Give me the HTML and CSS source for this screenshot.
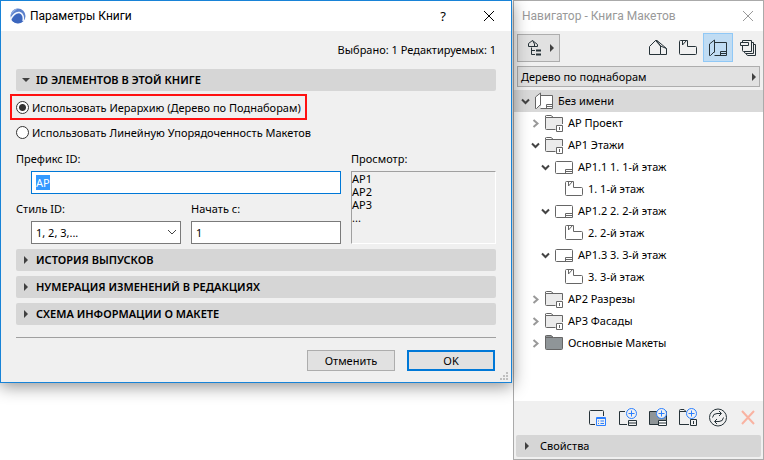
FILE: index.html
```html
<!DOCTYPE html>
<html lang="ru">
<head>
    <meta charset="UTF-8">
    <meta name="viewport" content="width=device-width, initial-scale=1.0">
    <title>Параметры Книги</title>
    <link rel="stylesheet" href="styles.css">
</head>
<body>

    <!-- icons used more than once -->
    <svg class="sprite" aria-hidden="true">
        <symbol id="close" viewBox="0 0 12 12"><path d="M1 1L11 11M11 1L1 11"/></symbol>
        <symbol id="right" viewBox="0 0 6 8"><path class="solid" d="M1 0V8L5 4z"/></symbol>
        <symbol id="down" viewBox="0 0 8 6"><path class="solid" d="M0 1H8L4 5z"/></symbol>
        <symbol id="open" viewBox="0 0 9 9"><path d="M1 2.500L4.500 6L8 2.500"/></symbol>
        <symbol id="closed" viewBox="0 0 9 9"><path d="M2.500 1L6.500 4.500L2.500 8"/></symbol>
        <symbol id="book" viewBox="0 0 18 18">
            <path d="M5.500 3.500H17.500V16.500H5.500M5.500 13.500V1L0.500 5V16.500H1.500L5.500 12.500M11.500 16.500V12.500H17.500M11.500 14.500H17.500"/>
        </symbol>
        <symbol id="plan" viewBox="0 0 18 18">
            <path d="M0.500 2.500Q0.500 1.500 1.500 1.500H8.500V7.500H16.500Q17.500 7.500 17.500 8.500V14.500Q17.500 15.500 16.500 15.500H1.500Q0.500 15.500 0.500 14.500z"/>
            <path d="M3.500 1.500V6L7.500 1.500"/>
        </symbol>
        <symbol id="folder" viewBox="0 0 18 18">
            <path class="fill" d="M0.500 15.500V3.500H17.500V15.500z"/>
            <path d="M10.500 15.500H1.500Q0.500 15.500 0.500 14.500V3.500H17.500V10"/>
            <path d="M0.500 3.500V2Q0.500 1.500 1.500 1.500H6L8.500 3.500"/>
            <path class="page" d="M11.500 11.500H17.500V17.500H11.500z"/>
            <path d="M14.500 13V16"/>
        </symbol>
        <symbol id="folder-full" viewBox="0 0 18 18">
            <path class="full" d="M0.500 14.500V2Q0.500 1.500 1.500 1.500H6L8.500 3.500H17.500V14.500Q17.500 15.500 16.500 15.500H1.500Q0.500 15.500 0.500 14.500z"/>
            <path d="M0.500 3.500H8.500"/>
        </symbol>
        <symbol id="layout" viewBox="0 0 18 18">
            <path d="M1.500 3.500H16.500Q17.500 3.500 17.500 4.500V15.500H1.500Q0.500 15.500 0.500 14.500V4.500Q0.500 3.500 1.500 3.500zM10.500 15.500V11.500H17.500M10.500 13.500H17.500"/>
        </symbol>
    </svg>

    <main class="desktop">

        <form class="dialog">
            <header class="titlebar">
                <svg class="logo" viewBox="0 0 16 16">
                    <circle cx="8" cy="8" r="7.500" fill="#5b80cc"/>
                    <path d="M0.500 8C1 4 4 0.500 8 0.500C6 2 3 4 0.500 8z" fill="#8eabe2"/>
                    <path d="M1.500 12C4 7 7 5 9.500 5.500C12 6.500 13 10 12 14C8 16.500 3.500 15 1.500 12z" fill="#3c66bd"/>
                    <path d="M0.500 11.500C3 6.500 6.500 4 9.500 4.500C13 5.500 14 9.500 13 13" fill="none" stroke="#f4f8ff" stroke-width="1.500"/>
                </svg>
                <h1>Параметры Книги</h1>
                <button class="plain help" type="button" aria-label="Справка">?</button>
                <button class="plain close" type="button" aria-label="Закрыть"><svg class="x"><use href="#close"/></svg></button>
            </header>

            <div class="content">
                <p class="status">Выбрано: 1 Редактируемых: 1</p>

                <button class="section" type="button"><svg class="mark"><use href="#down"/></svg>ID ЭЛЕМЕНТОВ В ЭТОЙ КНИГЕ</button>

                <div class="choices">
                    <label class="choice marked"><input type="radio" name="order" checked>Использовать Иерархию (Дерево по Поднаборам)</label>
                    <label class="choice"><input type="radio" name="order">Использовать Линейную Упорядоченность Макетов</label>
                </div>

                <div class="settings">
                    <div class="fields">
                        <div class="field wide">
                            <label for="prefix">Префикс ID:</label>
                            <input class="indent" id="prefix" type="text" value="АР">
                        </div>
                        <div class="field">
                            <label for="style">Стиль ID:</label>
                            <div class="select indent">
                                <select id="style"><option>1, 2, 3,...</option></select>
                                <svg viewBox="0 0 10 6"><path d="M1 1L5 5L9 1"/></svg>
                            </div>
                        </div>
                        <div class="field">
                            <label for="start">Начать с:</label>
                            <input id="start" type="text" value="1">
                        </div>
                    </div>
                    <div class="field">
                        <label for="preview">Просмотр:</label>
                        <output id="preview" class="preview">АР1<br>АР2<br>АР3<br>...</output>
                    </div>
                </div>

                <div class="sections">
                    <button class="section" type="button"><svg class="mark"><use href="#right"/></svg>ИСТОРИЯ ВЫПУСКОВ</button>
                    <button class="section" type="button"><svg class="mark"><use href="#right"/></svg>НУМЕРАЦИЯ ИЗМЕНЕНИЙ В РЕДАКЦИЯХ</button>
                    <button class="section" type="button"><svg class="mark"><use href="#right"/></svg>СХЕМА ИНФОРМАЦИИ О МАКЕТЕ</button>
                </div>

                <footer class="actions">
                    <button class="btn" type="button">Отменить</button>
                    <button class="btn main" type="button">OK</button>
                </footer>
            </div>
            <svg class="grip" viewBox="0 0 8 8"><path d="M6 0h2v2H6zM3 3h2v2H3zM6 3h2v2H6zM0 6h2v2H0zM3 6h2v2H3zM6 6h2v2H6z"/></svg>
        </form>

        <aside class="navigator">
            <header class="titlebar">
                <h2>Навигатор - Книга Макетов</h2>
                <button class="plain close" type="button" aria-label="Закрыть"><svg class="x"><use href="#close"/></svg></button>
            </header>

            <div class="toolbar">
                <button class="chooser" type="button" aria-label="Выбор проекта">
                    <svg class="icon" viewBox="0 0 18 18">
                        <path d="M2.500 7.500V4.500L6.500 1.500L11.500 5.500V7.500H2.500M6.500 1.500L8.500 5V7.500M5.500 8.500V15.500H9M5.500 11.500H9"/>
                        <path class="thick" d="M10 11.500H15M10 15.500H15"/>
                    </svg>
                    <svg class="mark"><use href="#right"/></svg>
                </button>
                <div class="tabs">
                    <button class="tab" type="button" aria-label="Карта проекта">
                        <svg class="icon" viewBox="0 0 18 18"><path d="M0.500 15.500V7.500L6.500 1.500L11.500 7V15.500H0.500M6.500 1.500H8L17.500 9.500V15.500H11.500M8 2L11.500 7L17.500 9.500"/></svg>
                    </button>
                    <button class="tab" type="button" aria-label="Карта видов"><svg class="icon"><use href="#plan"/></svg></button>
                    <button class="tab active" type="button" aria-label="Книга макетов"><svg class="icon"><use href="#book"/></svg></button>
                    <button class="tab" type="button" aria-label="Наборы издателя">
                        <svg class="icon" viewBox="0 0 18 18"><path d="M3.500 3.500V1.500H12.500V12.500H4.500Q3.500 12.500 3.500 11.500V6.500M1.500 3.500H9.500V6.500H1.500zM12.500 3.500H14.500V14.500H6.500Q5.500 14.500 5.500 12.500M14.500 5.500H16.500V16.500H8.500Q7.500 16.500 7.500 14.500"/></svg>
                    </button>
                </div>
            </div>

            <div class="picker">
                <button class="view" type="button">Дерево по поднаборам<svg class="mark"><use href="#right"/></svg></button>
            </div>

            <ul class="tree">
                <li class="row current"><svg class="twist open"><use href="#open"/></svg><svg class="icon"><use href="#book"/></svg>Без имени</li>
                <li class="row level1"><svg class="twist"><use href="#closed"/></svg><svg class="icon"><use href="#folder"/></svg>АР Проект</li>
                <li class="row level1"><svg class="twist open"><use href="#open"/></svg><svg class="icon"><use href="#folder"/></svg>АР1 Этажи</li>
                <li class="row level2"><svg class="twist open"><use href="#open"/></svg><svg class="icon"><use href="#layout"/></svg>АР1.1 1. 1-й этаж</li>
                <li class="row level3"><svg class="icon"><use href="#plan"/></svg>1. 1-й этаж</li>
                <li class="row level2"><svg class="twist open"><use href="#open"/></svg><svg class="icon"><use href="#layout"/></svg>АР1.2 2. 2-й этаж</li>
                <li class="row level3"><svg class="icon"><use href="#plan"/></svg>2. 2-й этаж</li>
                <li class="row level2"><svg class="twist open"><use href="#open"/></svg><svg class="icon"><use href="#layout"/></svg>АР1.3 3. 3-й этаж</li>
                <li class="row level3"><svg class="icon"><use href="#plan"/></svg>3. 3-й этаж</li>
                <li class="row level1"><svg class="twist"><use href="#closed"/></svg><svg class="icon"><use href="#folder"/></svg>АР2 Разрезы</li>
                <li class="row level1"><svg class="twist"><use href="#closed"/></svg><svg class="icon"><use href="#folder"/></svg>АР3 Фасады</li>
                <li class="row level1"><svg class="twist"><use href="#closed"/></svg><svg class="icon"><use href="#folder-full"/></svg>Основные Макеты</li>
            </ul>

            <div class="tools">
                <button class="plain" type="button" aria-label="Параметры">
                    <svg class="tool" viewBox="0 0 20 20">
                        <path d="M7 16.500H2.500Q1.500 16.500 1.500 15.500V3.500Q1.500 2.500 2.500 2.500H14.500Q15.500 2.500 15.500 3.500V8"/>
                        <path class="blue" d="M8.500 9.500H17.500V17.500H8.500zM8.500 10.500H17.500M10 13H11M12.500 13H16M10 15.500H11M12.500 15.500H16"/>
                    </svg>
                </button>
                <button class="plain" type="button" aria-label="Новый макет">
                    <svg class="tool" viewBox="0 0 20 20">
                        <path d="M7 3.500H1.500V16.500H9M10.500 17.500V12.500H18.500V17.500zM10.500 15H18.500"/>
                        <circle class="blue" cx="13.500" cy="5.500" r="5"/><path class="blue" d="M13.500 2.500V8.500M10.500 5.500H16.500"/>
                    </svg>
                </button>
                <button class="plain" type="button" aria-label="Новый основной макет">
                    <svg class="tool" viewBox="0 0 20 20">
                        <path class="full" d="M1.500 3.500H18.500V16.500H1.500z"/>
                        <path class="page" d="M10.500 12.500H18.500V17.500H10.500z"/><path d="M10.500 15H18.500"/>
                        <circle class="blue ring" cx="13.500" cy="5.500" r="5"/><path class="blue" d="M13.500 2.500V8.500M10.500 5.500H16.500"/>
                    </svg>
                </button>
                <button class="plain" type="button" aria-label="Новый поднабор">
                    <svg class="tool" viewBox="0 0 20 20">
                        <path d="M11 16.500H1.500V2.500Q1.500 1.500 2.500 1.500H6L8 3.500H1.500M12.500 11.500H18.500V17.500H12.500zM15.500 13V16"/>
                        <circle class="blue" cx="13.500" cy="5.500" r="5"/><path class="blue" d="M13.500 2.500V8.500M10.500 5.500H16.500"/>
                    </svg>
                </button>
                <button class="plain" type="button" aria-label="Обновить">
                    <svg class="tool" viewBox="0 0 20 20">
                        <circle cx="10" cy="9.500" r="8.500"/>
                        <path d="M4.500 9.500Q5 5.500 9 5.500H13M11 3L13.500 5.500L11 8M15.500 9.500Q15 13.500 11 13.500H7M9 11L6.500 13.500L9 16"/>
                    </svg>
                </button>
                <button class="plain" type="button" aria-label="Удалить"><svg class="tool remove" viewBox="0 0 20 20"><path d="M4 3L16 16M16 3L4 16"/></svg></button>
            </div>

            <button class="properties" type="button"><svg class="mark"><use href="#right"/></svg>Свойства</button>
        </aside>
    </main>

    <script src="script.js"></script>
</body>
</html>
```
FILE: styles.css
```css
*{
    box-sizing: border-box;
    margin: 0;
    padding: 0;
}
body{
    font-family: "Noto Sans", "Open Sans", sans-serif;
    font-size: 11px;
    line-height: 13px;
    color: #000;
    background: #fff;
}
button, input, select{
    font: inherit;
    color: inherit;
}
svg{
    display: block;
    flex: none;
    fill: none;
    stroke: #263238;
}
.sprite{
    display: none;
}
.solid{
    fill: #404040;
    stroke: none;
}
.thick{
    stroke-width: 2;
}
.desktop{
    display: flex;
    align-items: flex-start;
    gap: 1px;
    min-height: 100vh;
    overflow: hidden;
}
.plain{
    display: flex;
    align-items: center;
    justify-content: center;
    border: none;
    background: none;
}
.mark{
    width: 8px;
    height: 8px;
}
.icon{
    width: 18px;
    height: 18px;
}

/* dialog */
.dialog{
    position: relative;
    flex: 1;
    border: 1px solid #1883d7;
    background: #f0f0f0;
    box-shadow: 0 3px 16px rgba(0, 0, 0, 0.45);
}
.titlebar{
    display: flex;
    align-items: center;
    height: 30px;
    background: #fff;
}
.titlebar h1, .titlebar h2{
    flex: 1;
    font-family: Roboto, "Noto Sans", sans-serif;
    font-size: 12px;
    font-weight: normal;
}
.dialog .titlebar{
    padding: 0 16px 0 9px;
}
.logo{
    width: 16px;
    height: 16px;
    margin-right: 4px;
    stroke: none;
}
.help{
    width: 14px;
    margin-right: 33px;
    font-size: 13px;
}
.x{
    width: 12px;
    height: 12px;
    stroke: #000;
}
.content{
    padding: 12px 15px 11px;
}
.status{
    margin-bottom: 13px;
    text-align: right;
}
.section{
    display: flex;
    align-items: center;
    gap: 6px;
    width: 100%;
    height: 22px;
    padding: 0 6px 2px;
    border: none;
    border-radius: 2px;
    background: #d6d6d6;
    font-weight: 600;
}
.choices{
    display: flex;
    flex-direction: column;
    align-items: flex-start;
    margin: 3px 0 8px;
}
.choice{
    display: flex;
    align-items: center;
    gap: 3px;
    height: 24px;
}
.marked{
    height: 26px;
    margin: 0 -6px;
    padding: 0 4px;
    border: 2px solid #f11;
}
.choice input{
    appearance: none;
    width: 13px;
    height: 13px;
    border: 1px solid #333;
    border-radius: 50%;
    background: #fff;
}
.choice input:checked{
    background: radial-gradient(circle, #333 3px, #fff 4px);
}
.settings{
    display: grid;
    grid-template-columns: 325fr 145fr;
    gap: 10px;
}
.fields{
    display: grid;
    grid-template-columns: 165fr 150fr;
    gap: 8px 10px;
}
.wide{
    grid-column: span 2;
}
.field{
    display: flex;
    flex-direction: column;
    gap: 6px;
    min-width: 0;
}
.field input, .field select{
    min-width: 0;
    height: 23px;
    padding: 0 4px;
    border: 1px solid #7a7a7a;
    border-radius: 0;
    outline: none;
    background: #fff;
}
.field input:focus{
    border-color: #0078d7;
}
.field input::selection{
    color: #fff;
    background: #3399ff;
}
.indent{
    margin-left: 15px;
}
.select{
    position: relative;
}
.select select{
    appearance: none;
    width: 100%;
}
.select svg{
    position: absolute;
    top: 8px;
    right: 4px;
    width: 10px;
    height: 6px;
    stroke: #444;
    pointer-events: none;
}
.preview{
    flex: 1;
    border: 1px solid #a0a0a0;
    border-right-color: #fff;
    border-bottom-color: #fff;
}
.sections{
    display: flex;
    flex-direction: column;
    gap: 5px;
    margin: 5px 0 12px;
}
.actions{
    display: flex;
    justify-content: flex-end;
    gap: 12px;
    padding: 12px 1px 0 0;
    border-top: 1px solid #a0a0a0;
}
.btn{
    width: 88px;
    height: 21px;
    border: 1px solid #adadad;
    background: #e1e1e1;
}
.btn.main{
    border: 2px solid #0078d7;
}
.grip{
    position: absolute;
    right: 3px;
    bottom: 2px;
    width: 8px;
    height: 8px;
    fill: #bfbfbf;
    stroke: none;
}

/* navigator */
.navigator{
    display: flex;
    flex-direction: column;
    width: 251px;
    height: 100vh;
    border: 1px solid #aaa;
    background: #f0f0f0;
}
.navigator .titlebar{
    padding: 0 9px 0 8px;
    color: #999;
}
.navigator .x{
    stroke: #999;
}
.toolbar{
    display: flex;
    align-items: center;
    justify-content: space-between;
    padding: 2px 0 3px 3px;
}
.chooser{
    display: flex;
    align-items: center;
    gap: 4px;
    height: 28px;
    padding: 0 3px 0 8px;
    border: 1px solid #adadad;
    background: #e1e1e1;
}
.tabs{
    display: flex;
}
.tab{
    display: flex;
    align-items: center;
    justify-content: center;
    width: 30px;
    height: 29px;
    border: 1px solid transparent;
    background: none;
}
.tab.active{
    border-color: #90c8f6;
    background: #c0dcf3;
}
.picker{
    padding: 1px 3px 3px;
}
.view{
    display: flex;
    align-items: center;
    justify-content: space-between;
    width: 100%;
    height: 21px;
    padding: 0 1px 0 3px;
    border: 1px solid #adadad;
    background: #e1e1e1;
}
.tree{
    flex: 1;
    list-style: none;
    background: #fff;
}
.row{
    display: flex;
    align-items: center;
    gap: 5px;
    height: 22px;
    padding: 0 0 2px 7px;
}
.row svg, .section svg, .properties svg{
    margin-top: 2px;
}
.row.current{
    background: #d9d9d9;
}
.level1{
    padding-left: 17px;
}
.level2{
    padding-left: 27px;
}
.level3{
    padding-left: 51px;
}
.row .icon{
    stroke: #666;
}
.current .icon{
    fill: #fff;
}
.twist{
    width: 9px;
    height: 9px;
    stroke: #999;
    stroke-width: 2;
}
.twist.open{
    stroke: #444;
}
.fill{
    fill: #ebebeb;
    stroke: none;
}
.full{
    fill: #8f9598;
}
.page{
    fill: #fff;
}
.tools{
    display: flex;
    justify-content: flex-end;
    gap: 10px;
    padding: 7px 5px;
}
.tool{
    width: 20px;
    height: 20px;
}
.blue{
    stroke: #2b7fff;
}
.ring{
    fill: #f0f0f0;
}
.remove{
    stroke: #f9b3a2;
    stroke-width: 2;
}
.properties{
    display: flex;
    align-items: center;
    gap: 9px;
    height: 22px;
    margin: 0 2px 2px;
    padding: 0 7px 2px;
    border: none;
    border-radius: 2px;
    background: #d6d6d6;
}
```
FILE: script.js
```js
const prefix = document.querySelector("#prefix");

prefix.focus();
prefix.select();
```
